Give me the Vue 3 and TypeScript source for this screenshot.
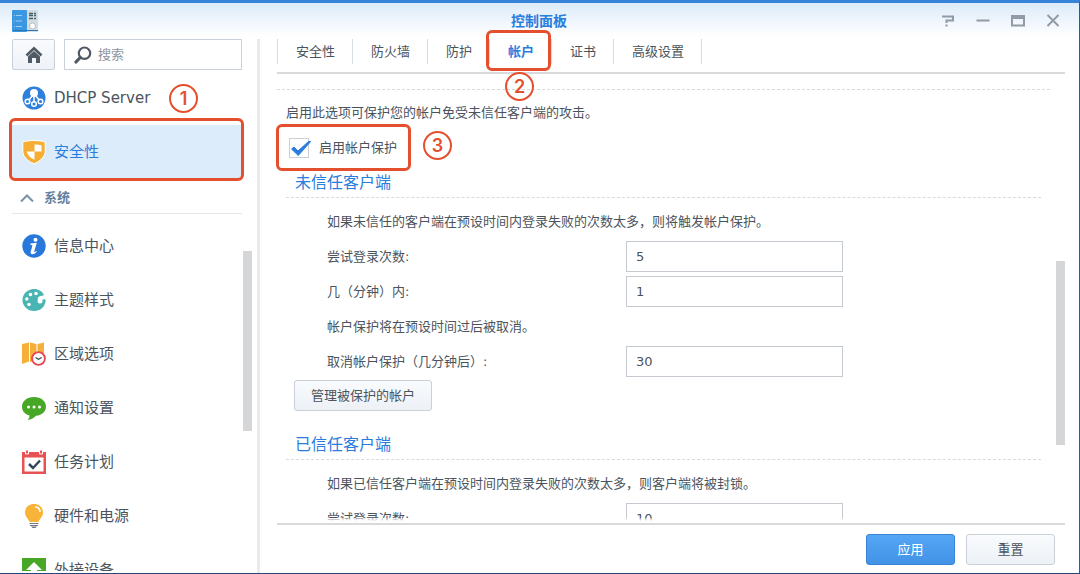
<script setup lang="ts">
import { ref } from 'vue'

interface NavItem {
  id: string
  label: string
}

const topItems: NavItem[] = [
  { id: 'dhcp', label: 'DHCP Server' },
  { id: 'security', label: '安全性' },
]
const systemItems: NavItem[] = [
  { id: 'info', label: '信息中心' },
  { id: 'theme', label: '主题样式' },
  { id: 'region', label: '区域选项' },
  { id: 'notify', label: '通知设置' },
  { id: 'task', label: '任务计划' },
  { id: 'power', label: '硬件和电源' },
  { id: 'external', label: '外接设备' },
]
const tabs: string[] = ['安全性', '防火墙', '防护', '帐户', '证书', '高级设置']

const activeTab = ref('帐户')
const protect = ref(true)
const attempts = ref('5')
const minutes = ref('1')
const cancelAfter = ref('30')
const trustedAttempts = ref('10')
const keyword = ref('')
</script>

<template>
  <div class="window">
    <header class="titlebar">
      <svg class="app-icon" viewBox="0 0 26 22" aria-hidden="true">
        <rect width="26" height="22" rx="1" fill="#d4dce0" />
        <rect width="15" height="22" rx="1" fill="#3b97df" />
        <path d="M1 20.500h25" stroke="#2878b8" />
        <path d="M2 5.500h9M2 11h9M2 16.500h9" stroke="#9bd0f5" stroke-dasharray="1 1 6 1" />
        <path d="M17 3.500h7M17 5.500h7M17 8.500h7" stroke="#45616c" stroke-width="1.500" stroke-dasharray="4 1" />
        <circle cx="20.500" cy="16" r="3" fill="#fff" stroke="#b4bec4" />
      </svg>
      <h1>控制面板</h1>
      <div class="controls">
        <button type="button" aria-label="帮助">
          <svg viewBox="0 0 14 14"><path d="M1 2.500h11v4H5.500v2.500M5.500 10.500v2" /></svg>
        </button>
        <button type="button" aria-label="最小化">
          <svg viewBox="0 0 14 14"><path d="M0.500 6.500h13" /></svg>
        </button>
        <button type="button" aria-label="最大化">
          <svg viewBox="0 0 14 14"><path d="M1 2h12v9.500H1zM1 4h12" /></svg>
        </button>
        <button type="button" aria-label="关闭">
          <svg viewBox="0 0 14 14"><path d="M1.500 1l11 11M12.500 1l-11 11" /></svg>
        </button>
      </div>
    </header>

    <div class="body">
      <aside class="sidebar">
        <div class="tools">
          <button type="button" class="home" aria-label="主页">
            <svg viewBox="0 0 18 18">
              <path d="M1.500 9.500L9 2.300l7.500 7.200" fill="none" stroke="#505a64" stroke-width="2.600" />
              <path d="M3 10.500l6-5.500 6 5.500V17h-4v-5H7v5H3z" fill="#505a64" />
            </svg>
          </button>
          <label class="search">
            <svg viewBox="0 0 18 18" aria-hidden="true">
              <circle cx="10.500" cy="7.200" r="5.700" fill="none" stroke="#505a64" stroke-width="2.200" />
              <path d="M6.200 11.500L2 16" stroke="#505a64" stroke-width="3.200" stroke-linecap="round" />
            </svg>
            <input v-model="keyword" type="text" placeholder="搜索" aria-label="搜索" />
          </label>
        </div>

        <div class="nav-area">
          <nav>
            <a v-for="item in topItems" :key="item.id" href="#" class="item" :class="{ selected: item.id === 'security' }">
              <svg v-if="item.id === 'dhcp'" viewBox="0 0 24 24" aria-hidden="true">
                <circle cx="12" cy="12" r="11.500" fill="#2f80dc" />
                <path d="M12 9v8M11 9L6 15M13 9l5 6" stroke="#fff" stroke-width="1.500" />
                <circle cx="12" cy="7" r="4" fill="#fff" />
                <g fill="#2f80dc" stroke="#fff" stroke-width="1.500">
                  <circle cx="5.500" cy="15.500" r="2.300" /><circle cx="12" cy="18" r="2.300" /><circle cx="18.500" cy="15.500" r="2.300" />
                </g>
              </svg>
              <svg v-else viewBox="0 0 24 24" aria-hidden="true">
                <path d="M12 .5C8 .5 4 1 .8 2v9c0 6 5 10 11.200 12.800C18.200 21 23.200 17 23.200 11V2C20 1 16 .5 12 .5z" fill="#f6ae32" stroke="#fff" />
                <path d="M12.500 4.500c3 0 5 .2 7 .7v6.300h-7zM5 11.500h7.500v8.200C8.500 18 5.200 15 5 11.500z" fill="#fff" />
              </svg>
              <span>{{ item.label }}</span>
              <span v-if="item.id === 'dhcp'" class="step step-one">1</span>
            </a>
            <button type="button" class="group">
              <svg viewBox="0 0 14 14" aria-hidden="true"><path d="M1 10.500l6-6 6 6" /></svg>
              系统
            </button>
            <a v-for="item in systemItems" :key="item.id" href="#" class="item">
              <svg v-if="item.id === 'info'" viewBox="0 0 24 24" aria-hidden="true">
                <circle cx="12" cy="12" r="11.700" fill="#2878dc" />
                <circle cx="13.500" cy="5.700" r="2" fill="#fff" />
                <path d="M8.500 9.500l6.300-.7-2.500 8.500c-.3 1.200.7 1 1.900-.4l.7.600c-2.400 3.600-7 3.600-6.200.2l1.600-5.800c.2-.8-.4-1-1.800-1z" fill="#fff" />
              </svg>
              <svg v-else-if="item.id === 'theme'" viewBox="0 0 24 24" aria-hidden="true">
                <path d="M12 1C5.500 1 .5 6 .5 12S5.500 23 12 23c6.500 0 11-4 11.500-10.500-.5-2-2.500-1.200-3.500-.5-3 2.500-6-1.500-3-3.500 1.500-.8 4.500-.5 5-1.500C20.500 3.500 16.500 1 12 1z" fill="#49b5b2" />
                <path d="M17 12c2 2 4 .5 6.500-.5l-.3 3.500-4.200 1z" fill="#49b5b2" />
                <g fill="#fff"><circle cx="14" cy="5.500" r="1.800" /><circle cx="8.500" cy="6.500" r="1.800" /><circle cx="4.800" cy="11" r="1.700" /><circle cx="7" cy="16.500" r="1.800" /><circle cx="18" cy="13" r="2.500" /></g>
              </svg>
              <svg v-else-if="item.id === 'region'" viewBox="0 0 24 24" aria-hidden="true">
                <path d="M0 2l7-1.500v19L0 22zM8 .5L14.500 2v19L8 19.500zM15.500 2L22 .5V17l-6.500 3z" fill="#f5b03c" />
                <circle cx="16.500" cy="16.500" r="6.400" fill="#fff" stroke="#e84853" stroke-width="1.900" />
                <path d="M13.500 15.500l3 1.700 3.200-1.700" fill="none" stroke="#324a5a" stroke-width="1.300" />
              </svg>
              <svg v-else-if="item.id === 'notify'" viewBox="0 0 24 24" aria-hidden="true">
                <path d="M12 1C5 1 0 5 0 10.700c0 4.500 3 7.500 7.500 8.800 0 2-.7 3.500-2 4.300 3.800-.1 6.500-1.600 8.500-4C20 19 24 15.500 24 10.700 24 5 19 1 12 1z" fill="#46a826" />
                <g fill="#fff"><circle cx="6.500" cy="11" r="1.500" /><circle cx="12" cy="11" r="1.500" /><circle cx="17.500" cy="11" r="1.500" /></g>
              </svg>
              <svg v-else-if="item.id === 'task'" viewBox="0 0 24 24" aria-hidden="true">
                <path d="M0 2h24v22H0z" fill="#e95252" />
                <path d="M2.500 7.500h19v14h-19z" fill="#fff" />
                <path d="M3.500 0h3v4h-3zM17.500 0h3v4h-3z" fill="#e95252" stroke="#fff" />
                <path d="M7 14l4 4 7-7.500" fill="none" stroke="#354859" stroke-width="2.500" />
              </svg>
              <svg v-else-if="item.id === 'power'" viewBox="0 0 24 24" aria-hidden="true">
                <path d="M12 0C6.500 0 3 3.700 3 8.500c0 4.500 3.500 6 4.500 9.500h9c1-3.500 4.500-5 4.500-9.500C21 3.700 17.500 0 12 0z" fill="#f8b339" />
                <path d="M7.500 19.500h9M8 21.500h8" stroke="#727884" stroke-width="1.200" />
                <path d="M9 22.500h6l-1.500 1.500h-3z" fill="#727884" />
                <path d="M13 3c3 0 5 2 5 5" fill="none" stroke="#fff" stroke-width="1.500" />
              </svg>
              <svg v-else viewBox="0 0 24 24" aria-hidden="true">
                <path d="M0 0h24v24H0z" fill="#46a826" />
                <path d="M12 4l8 8h-5v8H9v-8H4z" fill="#fff" />
              </svg>
              <span>{{ item.label }}</span>
            </a>
          </nav>
          <div class="track"><div class="thumb"></div></div>
        </div>
      </aside>

      <main>
        <div class="tabs" role="tablist">
          <button
            v-for="tab in tabs"
            :key="tab"
            type="button"
            role="tab"
            :aria-selected="tab === activeTab"
            :class="{ active: tab === activeTab }"
            @click="activeTab = tab"
          >
            {{ tab }}
            <span v-if="tab === '帐户'" class="step step-two">2</span>
          </button>
        </div>

        <div class="pane">
          <form id="account" class="settings" @submit.prevent>
            <hr />
            <div class="content">
              <p class="lead">启用此选项可保护您的帐户免受未信任客户端的攻击。</p>
              <div class="check-row">
                <label class="check">
                  <span class="box">
                    <input v-model="protect" type="checkbox" />
                    <svg v-if="protect" viewBox="0 0 22 20" aria-hidden="true"><path d="M2.500 11l2.500-2 4 4L19.500 3.500h2.200L9.300 17.500z" /></svg>
                  </span>
                  启用帐户保护
                </label>
                <span class="step step-three">3</span>
              </div>

              <h2>未信任客户端</h2>
              <div class="fields">
                <p>如果未信任的客户端在预设时间内登录失败的次数太多，则将触发帐户保护。</p>
                <div class="field"><label for="attempts">尝试登录次数:</label><input id="attempts" v-model="attempts" type="text" /></div>
                <div class="field"><label for="minutes">几（分钟）内:</label><input id="minutes" v-model="minutes" type="text" /></div>
                <p>帐户保护将在预设时间过后被取消。</p>
                <div class="field"><label for="cancel">取消帐户保护（几分钟后）:</label><input id="cancel" v-model="cancelAfter" type="text" /></div>
              </div>
              <button type="button" class="btn manage">管理被保护的帐户</button>

              <h2>已信任客户端</h2>
              <div class="fields">
                <p>如果已信任客户端在预设时间内登录失败的次数太多，则客户端将被封锁。</p>
                <div class="field"><label for="trusted">尝试登录次数:</label><input id="trusted" v-model="trustedAttempts" type="text" /></div>
              </div>
            </div>
          </form>
          <div class="track"><div class="thumb"></div></div>
        </div>

        <footer>
          <button type="submit" form="account" class="btn primary">应用</button>
          <button type="reset" form="account" class="btn">重置</button>
        </footer>
      </main>
    </div>
  </div>
</template>

<style>
body {
  margin: 0;
}
</style>

<style scoped>
* {
  box-sizing: border-box;
}
.window {
  display: flex;
  flex-direction: column;
  height: 100vh;
  overflow: hidden;
  border-top: 3px solid #3683d8;
  border-right: 1px solid #2c5a98;
  border-bottom: 1px solid #24487c;
  background: linear-gradient(#dcebfa, #fff 34px);
  color: #4b545d;
  font: 13px/20px "DejaVu Sans", "Noto Sans CJK SC", sans-serif;
}
button,
input {
  font: inherit;
  color: inherit;
}
button {
  padding: 0;
  border: 0;
  background: none;
}
p,
h1,
h2 {
  margin: 0;
}
.titlebar {
  display: grid;
  grid-template-columns: 1fr auto 1fr;
  align-items: center;
  flex: none;
  height: 36px;
  padding: 0 19px 0 12px;
}
.app-icon {
  width: 26px;
  height: 22px;
}
h1 {
  padding-left: 6px;
  color: #2a7ddd;
  font-size: 14px;
  font-weight: 700;
}
.controls {
  display: flex;
  justify-content: flex-end;
  gap: 21px;
}
.controls button,
.controls svg {
  display: block;
  width: 14px;
  height: 14px;
}
.controls path {
  fill: none;
  stroke: #929ba5;
  stroke-width: 2;
}
.body {
  display: flex;
  flex: 1;
  min-height: 0;
}
.sidebar {
  display: flex;
  flex-direction: column;
  flex: none;
  width: 260px;
  border-right: 3px solid #e8eaec;
}
.tools {
  display: flex;
  gap: 9px;
  flex: none;
  padding: 0 15px 1px 12px;
}
.home {
  display: grid;
  place-items: center;
  flex: none;
  width: 43px;
  height: 31px;
  border: 1px solid #c9d2da;
  border-radius: 2px;
  background: linear-gradient(#f9fbfd, #eef2f8);
}
.home svg,
.search svg {
  flex: none;
  width: 18px;
  height: 18px;
}
.search {
  display: flex;
  align-items: center;
  gap: 6px;
  flex: 1;
  min-width: 0;
  height: 31px;
  padding-left: 9px;
  border: 1px solid #c9d2da;
  background: #fff;
}
.search input {
  flex: 1;
  min-width: 0;
  padding: 0;
  border: 0;
  outline: 0;
  background: none;
}
.search input::placeholder {
  color: #8d969f;
  opacity: 1;
}
.nav-area {
  display: flex;
  flex: 1;
  min-height: 0;
  margin-bottom: 2px;
  padding-right: 5px;
  overflow: hidden;
}
nav {
  flex: 1;
  min-width: 0;
  padding: 0 1px 0 12px;
}
.item {
  position: relative;
  display: flex;
  align-items: center;
  gap: 8px;
  height: 54px;
  padding-left: 10px;
  color: #4b545d;
  font-size: 15px;
  text-decoration: none;
}
.item svg {
  flex: none;
  width: 24px;
  height: 24px;
}
.selected {
  background: #dcecfb;
  color: #2a7ddd;
}
.selected::after,
.active::after,
.check::after {
  content: "";
  position: absolute;
  inset: -7px -2px -2px -3px;
  border: 3px solid #e4502e;
  border-radius: 6px;
  pointer-events: none;
}
.group {
  display: flex;
  align-items: center;
  gap: 10px;
  width: 100%;
  height: 35px;
  margin-bottom: 5px;
  padding: 4px 0 0 8px;
  border-bottom: 1px solid #e4e7ea;
  color: #6480a0;
  font-weight: 700;
}
.group svg {
  width: 14px;
  height: 14px;
  fill: none;
  stroke: #7890a8;
  stroke-width: 2;
}
.track {
  flex: none;
  width: 9px;
}
.thumb {
  background: #d5d6d8;
}
.nav-area .thumb {
  height: 36%;
  margin-top: 180px;
}
.step {
  position: absolute;
  display: grid;
  place-items: center;
  width: 29px;
  height: 29px;
  border: 2px solid #e4502e;
  border-radius: 50%;
  color: #e4502e;
  font: 600 18px/25px Inter, sans-serif;
}
.step-one {
  left: 157px;
}
main {
  display: flex;
  flex-direction: column;
  flex: 1;
  min-width: 0;
  padding: 0 14px 0 17px;
}
.tabs {
  display: flex;
  flex: none;
  height: 35px;
  padding-bottom: 8px;
  border-bottom: 2px solid #d8dadc;
}
.tabs button {
  position: relative;
  padding: 0 17px 0 18px;
  border-right: 1px solid #d5dce2;
}
.tabs button:first-child {
  border-left: 1px solid #d5dce2;
}
.tabs .active {
  color: #2a7ddd;
  font-weight: 700;
}
.active::after {
  inset: -9px 0 -7px -4px;
}
.step-two {
  top: 33px;
  left: 15px;
  z-index: 1;
}
.pane {
  position: relative;
  display: flex;
  flex: 1;
  min-height: 0;
  margin-left: -4px;
  padding-left: 4px;
  overflow: hidden;
}
.pane::after {
  content: "";
  position: absolute;
  inset: auto 0 0;
  height: 5px;
  background: linear-gradient(#ffffff60, #fff 60%);
}
.settings {
  flex: 1;
  min-width: 0;
}
hr {
  height: 0;
  margin: 15px 6px 0 0;
  border: 0;
  border-top: 1px dashed #d8dadc;
}
.content {
  padding: 6px 15px 0 9px;
}
.lead {
  line-height: 34px;
}
.check-row {
  display: flex;
  align-items: center;
  height: 35px;
}
.check {
  position: relative;
  display: flex;
  align-items: center;
  gap: 10px;
  margin-left: 3px;
}
.check::after {
  inset: -14px -14px -13px -13px;
}
.box {
  position: relative;
  width: 20px;
  height: 20px;
}
.box input {
  display: block;
  appearance: none;
  width: 20px;
  height: 20px;
  margin: 0;
  border: 1px solid #c9d0d6;
  background: #fff;
}
.box svg {
  position: absolute;
  inset: 0;
  width: 22px;
  height: 20px;
  fill: #2a7ddd;
  stroke: #2a7ddd;
}
.step-three {
  left: 150px;
  top: 57px;
}
h2 {
  height: 33px;
  padding-left: 9px;
  border-bottom: 1px dashed #d8dadc;
  color: #2a7ddd;
  font-size: 16px;
  font-weight: 400;
  line-height: 35px;
}
.fields {
  padding: 6px 0 0 41px;
}
.fields p {
  line-height: 35px;
}
.field {
  display: flex;
  align-items: center;
  height: 35px;
}
.field label {
  width: 299px;
}
.field input {
  width: 217px;
  height: 31px;
  padding: 0 9px;
  border: 1px solid #c5cad0;
  border-radius: 0;
  background: #fff;
}
.btn {
  height: 31px;
  min-width: 89px;
  padding: 0 16px;
  border: 1px solid #c9d0d8;
  border-radius: 3px;
  background: linear-gradient(#f9fbfd, #edf1f6);
}
.manage {
  display: block;
  margin: 1px 0 16px 8px;
}
.pane .thumb {
  height: 41%;
  margin-top: 187px;
}
footer {
  display: flex;
  justify-content: flex-end;
  gap: 11px;
  flex: none;
  height: 50px;
  padding: 9px 10px 0 0;
  border-top: 2px solid #d8dadc;
}
.primary {
  border-color: #3984d6;
  background: linear-gradient(#56a6f6, #4292e6);
  color: #fff;
}
</style>
